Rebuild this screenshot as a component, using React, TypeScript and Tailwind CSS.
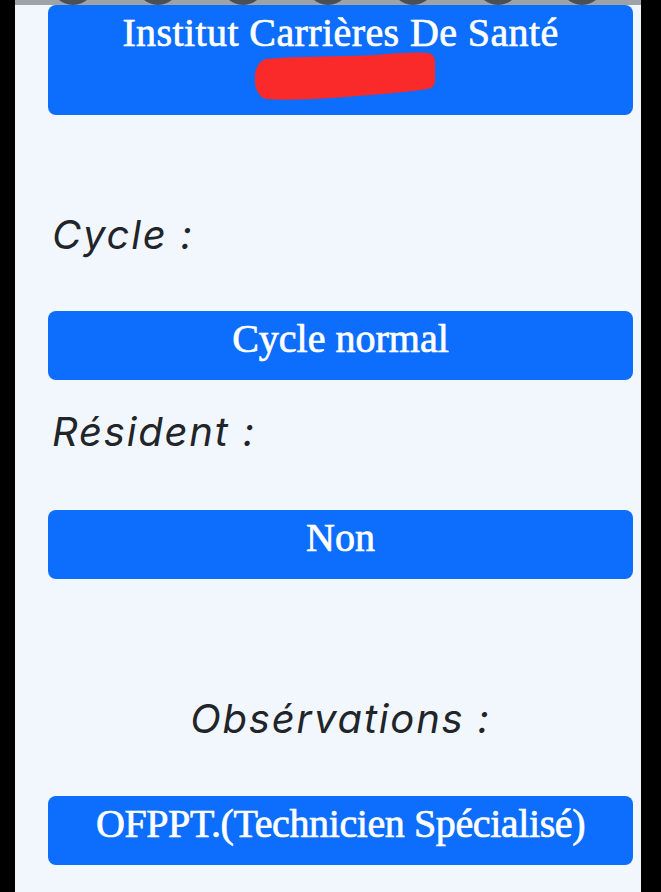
export default function App() {
  const dots = [0, 1, 2, 3, 4, 5, 6];
  return (
    <div className="min-h-screen bg-black flex" style={{ minHeight: 892 }}>
      <div className="ml-[15px] w-[626px] h-[892px] bg-[#f2f7fe] flex flex-col overflow-hidden">
        {/* top strip with rounded tabs cut off */}
        <div className="h-[5px] bg-[#9ea3a8] flex justify-around overflow-hidden px-4">
          {dots.map((d) => (
            <div key={d} className="w-[44px] h-[44px] -mt-[39px] rounded-full bg-[#4b4f53] shrink-0" />
          ))}
        </div>

        <div className="pl-[33px] pr-[8px] flex flex-col font-['Liberation_Serif',serif] [-webkit-text-stroke:0.7px_white]">
          {/* school */}
          <div className="relative h-[110px] bg-[#0d6efd] rounded-lg flex flex-col items-center text-white text-[40px] leading-[48px] pt-[4px]">
            <span className="tracking-[0.01em]">Institut Carrières De Santé</span>
            <span className="-ml-[150px]">I</span>
            <svg
              className="absolute left-[207px] top-[46px]"
              width="184"
              height="52"
              viewBox="0 0 184 52"
            >
              <path
                d="M12 16 C50 12 90 14 120 12 C145 10 160 8 172 10 L172 30 C150 34 120 36 90 38 C60 40 35 42 12 40 C6 34 6 22 12 16 Z"
                fill="#fa2a2a"
                stroke="#fa2a2a"
                strokeWidth="16"
                strokeLinecap="round"
                strokeLinejoin="round"
              />
            </svg>
          </div>

          {/* cycle */}
          <p className="mt-[96px] pl-[4px] text-[40px] leading-[48px] italic tracking-[0.045em] text-[#212529] font-['Inter',sans-serif] [-webkit-text-stroke:0]">
            Cycle :
          </p>
          <div className="mt-[52px] h-[69px] bg-[#0d6efd] rounded-lg flex justify-center text-white text-[40px] leading-[48px] pt-[4px]">
            Cycle normal
          </div>

          {/* resident */}
          <p className="mt-[28px] pl-[4px] text-[40px] leading-[48px] italic tracking-[0.045em] text-[#212529] font-['Inter',sans-serif] [-webkit-text-stroke:0]">
            Résident :
          </p>
          <div className="mt-[54px] h-[69px] bg-[#0d6efd] rounded-lg flex justify-center text-white text-[40px] leading-[48px] pt-[4px]">
            Non
          </div>

          {/* observations */}
          <p className="mt-[116px] text-center text-[40px] leading-[48px] italic tracking-[0.045em] text-[#212529] font-['Inter',sans-serif] [-webkit-text-stroke:0]">
            Obsérvations :
          </p>
          <div className="mt-[53px] h-[69px] bg-[#0d6efd] rounded-lg flex justify-center text-white text-[40px] leading-[48px] pt-[4px] tracking-[-0.01em]">
            OFPPT.(Technicien Spécialisé)
          </div>
        </div>
      </div>
    </div>
  );
}
